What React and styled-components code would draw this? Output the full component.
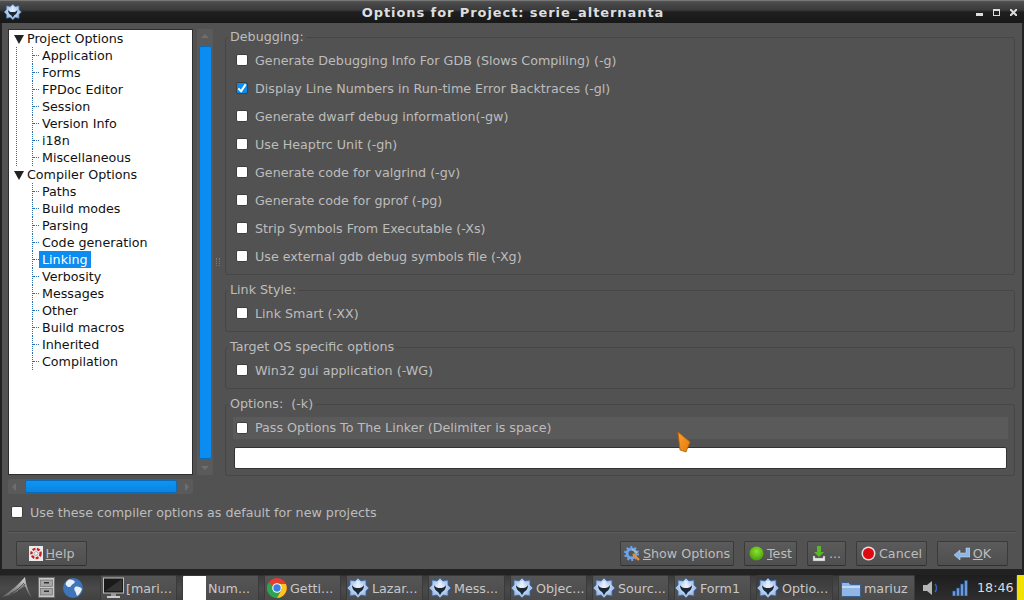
import React from "react";
import styled, { createGlobalStyle } from "styled-components";

const Global = createGlobalStyle`
  html, body { margin: 0; padding: 0; background: #525252; }
  * { box-sizing: border-box; }
  body { font-family: "DejaVu Sans", sans-serif; font-size: 12.7px; }
`;

const Screen = styled.div`
  position: relative;
  width: 1024px;
  height: 600px;
  overflow: hidden;
  display: flex;
  flex-direction: column;
  background: #525252;
  color: #bdbdbd;
`;

const TitleBar = styled.div`
  height: 23px;
  flex: none;
  display: flex;
  align-items: center;
  justify-content: space-between;
  padding: 0 7px 0 4px;
  background: linear-gradient(#555 0, #4a4a4a 2px, #3a3a3a 9px, #1f1f1f 11px, #181818 100%);
  border-top: 1px solid #777;
  color: #dedede;
  font-weight: bold;
  font-size: 13px;
  letter-spacing: 0.92px;
`;
const TitleText = styled.span`
  flex: 1;
  text-align: center;
  padding-left: 27px;
`;
const WinControls = styled.div`
  display: flex;
  align-items: center;
  gap: 10px;
`;

const Window = styled.div`
  flex: 1;
  display: flex;
  flex-direction: column;
  min-height: 0;
  border-left: 2px solid #222;
  border-right: 2px solid #222;
  border-bottom: 3px solid #222;
  padding: 6px 6px 0 6px;
`;
const Top = styled.div`
  display: flex;
  height: 465px;
  flex: none;
`;
const LeftCol = styled.div`
  width: 205px;
  flex: none;
  display: flex;
  flex-direction: column;
  gap: 4px;
`;
const TreeRow = styled.div`
  display: flex;
  height: 446px;
  gap: 4px;
`;
const Tree = styled.div`
  width: 185px;
  flex: none;
  background: #fff;
  border: 1px solid #2e2e2e;
  color: #111;
  padding: 0 0 0 7px;
`;
const Section = styled.div`
  border-left: 1px dotted ${(p) => (p.$line ? "#2a6fb5" : "transparent")};
`;
const Head = styled.div`
  height: 17px;
  display: flex;
  align-items: center;
  margin-left: -3px;
  gap: 3px;
  background: #fff;
  white-space: nowrap;
`;
const Children = styled.div`
  margin-left: 15px;
`;
const Leaf = styled.div`
  height: 17px;
  display: flex;
  align-items: center;
  white-space: nowrap;
  border-left: 1px dotted #2a6fb5;
`;
const Branch = styled.span`
  width: 6px;
  height: 0;
  border-top: 1px dotted #2a6fb5;
  flex: none;
`;
const LeafText = styled.span`
  padding: 0 3px;
  height: 17px;
  line-height: 17px;
  background: ${(p) => (p.$sel ? "#0a8cf0" : "transparent")};
  color: ${(p) => (p.$sel ? "#fff" : "#111")};
  min-width: ${(p) => (p.$sel ? "51px" : "0")};
`;

const VScroll = styled.div`
  width: 16px;
  flex: none;
  background: #5a5a5a;
  border-radius: 2px;
  display: flex;
  flex-direction: column;
  align-items: center;
  justify-content: space-between;
  padding: 0 2px;
`;
const VThumb = styled.div`
  width: 13px;
  height: 413px;
  background: #0a8cf0;
  border: 1px solid #0a6cb8;
  border-radius: 2px;
  flex: none;
`;
const HScroll = styled.div`
  width: 185px;
  height: 15px;
  background: #5a5a5a;
  border-radius: 2px;
  display: flex;
  align-items: center;
  justify-content: space-between;
  padding: 0 4px;
`;
const HThumb = styled.div`
  width: 152px;
  height: 13px;
  background: linear-gradient(#0f94f5, #0a84e0);
  border: 1px solid #0a6cb8;
  border-radius: 2px;
`;
const Arrow = styled.i`
  width: 0;
  height: 0;
  flex: none;
  display: block;
  border-style: solid;
  border-color: transparent;
  border-width: 4px;
  ${(p) => p.$dir === "up" && "border-bottom-color:#6e6e6e;border-top-width:0;margin-top:5px;"}
  ${(p) => p.$dir === "down" && "border-top-color:#6e6e6e;border-bottom-width:0;margin-bottom:5px;"}
  ${(p) => p.$dir === "left" && "border-right-color:#6e6e6e;border-left-width:0;"}
  ${(p) => p.$dir === "right" && "border-left-color:#6e6e6e;border-right-width:0;"}
`;

const Splitter = styled.div`
  width: 12px;
  flex: none;
  display: flex;
  align-items: center;
  padding-left: 3px;
`;
const Grip = styled.div`
  width: 4px;
  height: 8px;
  border-left: 1px dotted #777;
  border-right: 1px dotted #777;
`;

const RightCol = styled.div`
  width: 790px;
  flex: none;
  display: flex;
  flex-direction: column;
  gap: 7px;
`;
const Group = styled.fieldset`
  margin: 0;
  padding: 1px 6px 0 8px;
  border: 1px solid #464646;
  border-radius: 3px;
  min-width: 0;
  height: ${(p) => p.$h}px;
`;
const Legend = styled.legend`
  padding: 0 2px;
  margin-left: -6px;
  height: 16px;
  line-height: 15px;
  color: #bdbdbd;
  white-space: pre;
`;
const Row = styled.label`
  display: flex;
  align-items: center;
  height: 28px;
  gap: 7px;
  padding-left: 2px;
  white-space: nowrap;
`;
const Check = styled.span`
  width: 12px;
  height: 12px;
  flex: none;
  border-radius: 2px;
  border: 1px solid #3f3f3f;
  background: ${(p) => (p.$on ? "#0a8cf0" : "#fff")};
  display: flex;
  align-items: center;
  justify-content: center;
`;
const Strip = styled.div`
  height: 22px;
  margin: 4px 0 8px -1px;
  padding: 0 0 1px 3px;
  background: #5a5a5a;
  display: flex;
  align-items: center;
  gap: 7px;
`;
const Input = styled.div`
  height: 22px;
  width: 773px;
  background: #fff;
  border: 1px solid #333;
  border-radius: 2px;
`;

const DefaultRow = styled.div`
  display: flex;
  align-items: center;
  gap: 7px;
  height: 20px;
  margin: 8px 0 0 3px;
  flex: none;
`;
const Sep = styled.div`
  height: 2px;
  margin-top: 9px;
  flex: none;
  background: #444;
  border-bottom: 1px solid #5c5c5c;
`;
const Buttons = styled.div`
  display: flex;
  align-items: center;
  margin-top: 8px;
  padding: 0 8px 0 8px;
  flex: none;
`;
const Btn = styled.div`
  width: ${(p) => p.$w}px;
  height: 25px;
  flex: none;
  margin-left: ${(p) => p.$ml || 0}px;
  display: flex;
  align-items: center;
  justify-content: center;
  gap: 3px;
  background: linear-gradient(#5b5b5b, #4f4f4f);
  border: 1px solid #3a3a3a;
  border-bottom-color: #2f2f2f;
  border-radius: 2px;
  white-space: nowrap;
  color: #bdbdbd;
`;
const Spacer = styled.div`
  flex: 1;
`;

const Taskbar = styled.div`
  height: 28px;
  flex: none;
  display: flex;
  align-items: flex-end;
  background: linear-gradient(#222 0, #222 3px, #3c3c3c 4px, #4a4a4a 60%, #404040 100%);
`;
const QuickLaunch = styled.div`
  width: 100px;
  height: 25px;
  flex: none;
  display: flex;
  align-items: center;
  padding-left: 1px;
  gap: 5px;
`;
const TaskList = styled.div`
  display: flex;
  gap: 5px;
  height: 25px;
`;
const Task = styled.div`
  width: 77px;
  height: 25px;
  flex: none;
  display: flex;
  align-items: center;
  gap: 1px;
  padding-left: 2px;
  border: 1px solid #3a3a3a;
  border-bottom: none;
  border-radius: 2px 2px 0 0;
  background: ${(p) => (p.$active ? "linear-gradient(#3a3a3a,#4a4a4a)" : "linear-gradient(#555,#4b4b4b)")};
  color: #c8c8c8;
  white-space: nowrap;
  overflow: hidden;
`;
const Blank = styled.span`
  width: 23px;
  height: 24px;
  flex: none;
  background: #fff;
  margin: 0 1px 0 -2px;
`;
const Tray = styled.div`
  width: 101px;
  height: 25px;
  flex: none;
  display: flex;
  align-items: center;
  padding-left: 8px;
  gap: 9px;
  background: linear-gradient(#1e1e1e, #2e2e2e);
  color: #dcdcdc;
`;
const Notifier = styled.div`
  width: 7px;
  height: 25px;
  flex: none;
  margin-left: 1px;
  background: #f2e200;
`;
const Cursor = styled.svg`
  position: absolute;
  left: 677px;
  top: 431px;
`;
const LazSvg = styled.svg`
  flex: none;
  margin-left: ${(p) => p.$ml || 0}px;
`;

const Tri = () => (
  <svg width="10" height="10" viewBox="0 0 10 10" style={{ flex: "none" }}>
    <path d="M0 1H10L5 10Z" fill="#222" />
  </svg>
);
const Tick = () => (
  <svg width="11" height="11" viewBox="0 0 11 11">
    <path d="M1.5 5.5l3 3 5-7.5" fill="none" stroke="#fff" strokeWidth="2.2" />
  </svg>
);

const Lazarus = ({ w = 24, h = 20, ml = -2 }) => (
  <LazSvg width={w} height={h} viewBox="0 0 24 20" $ml={ml}>
    <defs>
      <radialGradient id="lz" cx=".5" cy=".45" r=".6">
        <stop offset="0" stopColor="#f4f8ff" />
        <stop offset="1" stopColor="#7fa8e0" />
      </radialGradient>
    </defs>
    <path d="M11 0l3 3 5-1 0 5 3 3-3 3 0 5-5-1-3 3-3-3-5 1 0-5-3-3 3-3 0-5 5 1z" fill="url(#lz)" stroke="#3d68a8" strokeWidth="0.8" />
    <path d="M5 7c1 2 3 3 5 3V4h2v6c2 0 4-1 5-3 0 4-2 6-4 7l-2 3-2-3c-2-1-4-3-4-7z" fill="#1c2836" />
    <path d="M9.5 3h3v7h-3z" fill="#e4eefc" />
  </LazSvg>
);
const Arch = () => (
  <svg width="32" height="24" viewBox="0 0 32 24" style={{ flex: "none" }}>
    <defs>
      <linearGradient id="ar" x1="0" y1="0" x2="0" y2="1">
        <stop offset="0" stopColor="#d8d8d8" />
        <stop offset="1" stopColor="#555" />
      </linearGradient>
    </defs>
    <path d="M1 21C10 15 18 8 24 1c1 7 3 15 8 22-4-4-6-8-8-13C18 15 10 19 1 21z" fill="url(#ar)" />
    <path d="M9 18c6-3 10-6 14-11M17 15c3-2 5-4 7-7" stroke="#2b2b2b" strokeWidth=".7" fill="none" />
  </svg>
);
const Cabinet = () => (
  <svg width="20" height="21" viewBox="0 0 20 21" style={{ flex: "none" }}>
    <rect x="0.5" y="0.5" width="16" height="20" fill="#c8c8c8" stroke="#6e6e6e" />
    <rect x="2.5" y="3" width="12" height="6.5" fill="#a6a6a6" stroke="#666" strokeWidth=".6" />
    <rect x="2.5" y="11.5" width="12" height="6.5" fill="#a6a6a6" stroke="#666" strokeWidth=".6" />
    <rect x="6" y="5" width="5" height="1.5" fill="#333" />
    <rect x="6" y="13.5" width="5" height="1.5" fill="#333" />
  </svg>
);
const Globe = () => (
  <svg width="20" height="20" viewBox="0 0 20 20" style={{ flex: "none" }}>
    <circle cx="10" cy="10" r="10" fill="#3f74b8" />
    <path d="M5 2c3-1 6 0 7 2-1 2-3 2-4 4S4 9 3 7s1-4 2-5zM12 9c2-1 6 0 7 2-1 3-3 6-5 7-1-2-1-4-2-5s-1-3 0-4z" fill="#e6eef7" />
  </svg>
);
const Monitor = () => (
  <svg width="22" height="22" viewBox="0 0 22 22" style={{ flex: "none" }}>
    <rect x="0.5" y="1" width="20" height="15" fill="#1a1a1a" stroke="#bdbdbd" />
    <path d="M2 14L19 2v12z" fill="#333" />
    <rect x="8" y="16" width="5" height="3" fill="#999" />
    <rect x="4" y="19" width="13" height="2" fill="#ccc" />
  </svg>
);
const Chrome = () => (
  <svg width="22" height="20" viewBox="0 0 22 20" style={{ flex: "none" }}>
    <circle cx="10" cy="10" r="10" fill="#e53d30" />
    <path d="M10 10L1.3 5A10 10 0 0 0 10 20L15 11z" fill="#2ea44f" />
    <path d="M10 6h8.9A10 10 0 0 1 10 20l5-9z" fill="#f8c81c" />
    <circle cx="10" cy="10" r="4.8" fill="#fff" />
    <circle cx="10" cy="10" r="3.7" fill="#3d7fe0" />
  </svg>
);
const Folder = () => (
  <svg width="22" height="17" viewBox="0 0 22 17" style={{ flex: "none" }}>
    <path d="M.5 2.5h7l2 2h10v12H.5z" fill="#8fb6e4" stroke="#3c5f94" />
    <path d="M1 6h18v2H1z" fill="#c3d9f2" />
  </svg>
);
const Speaker = () => (
  <svg width="20" height="16" viewBox="0 0 20 16" style={{ flex: "none" }}>
    <path d="M0 5h4l5-4v14l-5-4H0z" fill="#b5b5b5" />
    <path d="M12 4c2 2 2 6 0 8" stroke="#3568b5" strokeWidth="1.4" fill="none" />
  </svg>
);
const Signal = () => (
  <svg width="16" height="16" viewBox="0 0 16 16" style={{ flex: "none" }}>
    <g fill="#6a9ad8" stroke="#24477a" strokeWidth=".6">
      <rect x="0.5" y="11" width="3" height="5" />
      <rect x="4.5" y="8" width="3" height="8" />
      <rect x="8.5" y="4" width="3" height="12" />
      <rect x="12.5" y="0.5" width="3" height="15.5" />
    </g>
  </svg>
);

const HelpIcon = () => (
  <svg width="14" height="15" viewBox="0 0 14 15">
    <rect width="14" height="15" fill="#ececec" />
    <circle cx="7" cy="7.5" r="4.6" fill="none" stroke="#cc2020" strokeWidth="2.4" strokeDasharray="3 1.4" />
    <circle cx="7" cy="7.5" r="2" fill="#ececec" stroke="#777" strokeWidth=".5" />
  </svg>
);
const GearIcon = () => (
  <svg width="16" height="16" viewBox="0 0 16 16">
    <circle cx="7.5" cy="7.5" r="4.5" fill="none" stroke="#6ea4e4" strokeWidth="3" />
    <circle cx="7.5" cy="7.5" r="6.5" fill="none" stroke="#6ea4e4" strokeWidth="2" strokeDasharray="2 2.1" />
    <path d="M9 8l6 6" stroke="#e88d3c" strokeWidth="2.4" />
    <path d="M8 3l5 4" stroke="#bbb" strokeWidth="1.6" />
  </svg>
);
const GreenIcon = () => (
  <svg width="15" height="15" viewBox="0 0 15 15">
    <defs>
      <radialGradient id="g" cx=".5" cy=".35" r=".7">
        <stop offset="0" stopColor="#8fe030" />
        <stop offset="1" stopColor="#3f9a0a" />
      </radialGradient>
    </defs>
    <circle cx="7.5" cy="7.5" r="7" fill="url(#g)" />
  </svg>
);
const SaveIcon = () => (
  <svg width="14" height="16" viewBox="0 0 14 16">
    <path d="M5 0h4v6h3L7 11 2 6h3z" fill="#58b82a" />
    <path d="M1 10v5h12v-5l-2 0v2H3v-2z" fill="#e8e8e8" stroke="#888" strokeWidth=".4" />
  </svg>
);
const CancelIcon = () => (
  <svg width="15" height="15" viewBox="0 0 15 15">
    <circle cx="7.5" cy="7.5" r="7" fill="#e2e2e2" />
    <circle cx="7.5" cy="7.5" r="5.5" fill="#dd0a12" />
  </svg>
);
const OkIcon = () => (
  <svg width="16" height="13" viewBox="0 0 16 13">
    <path d="M0 8l6-5v3h6V1h4v9H6v3z" fill="#8db6e8" stroke="#cfe0f5" strokeWidth=".5" />
  </svg>
);

const project = ["Application", "Forms", "FPDoc Editor", "Session", "Version Info", "i18n", "Miscellaneous"];
const compiler = ["Paths", "Build modes", "Parsing", "Code generation", "Linking", "Verbosity", "Messages", "Other", "Build macros", "Inherited", "Compilation"];
const debugging = [
  "Generate Debugging Info For GDB (Slows Compiling) (-g)",
  "Display Line Numbers in Run-time Error Backtraces (-gl)",
  "Generate dwarf debug information(-gw)",
  "Use Heaptrc Unit (-gh)",
  "Generate code for valgrind (-gv)",
  "Generate code for gprof (-pg)",
  "Strip Symbols From Executable (-Xs)",
  "Use external gdb debug symbols file (-Xg)",
];
const tasks = [
  { label: "[mari...", icon: <Monitor /> },
  { label: "Num...", icon: <Blank /> },
  { label: "Getti...", icon: <Chrome /> },
  { label: "Lazar...", icon: <Lazarus /> },
  { label: "Mess...", icon: <Lazarus /> },
  { label: "Objec...", icon: <Lazarus /> },
  { label: "Sourc...", icon: <Lazarus /> },
  { label: "Form1", icon: <Lazarus /> },
  { label: "Optio...", icon: <Lazarus />, active: true },
  { label: "mariuz", icon: <Folder /> },
];

const Leaves = ({ items }) => (
  <Children>
    {items.map((t) => (
      <Leaf key={t}>
        <Branch />
        <LeafText $sel={t === "Linking"}>{t}</LeafText>
      </Leaf>
    ))}
  </Children>
);

export default function App() {
  return (
    <Screen>
      <Global />
      <TitleBar>
        <Lazarus w={19} h={16} ml={0} />
        <TitleText>Options for Project: serie_alternanta</TitleText>
        <WinControls>
          <svg width="7" height="7" viewBox="0 0 7 7">
            <rect y="4" width="7" height="3" fill="#ddd" />
          </svg>
          <svg width="7" height="7" viewBox="0 0 7 7">
            <rect x=".5" y=".5" width="6" height="6" fill="none" stroke="#ddd" />
            <rect width="7" height="2" fill="#ddd" />
          </svg>
          <svg width="7" height="7" viewBox="0 0 7 7">
            <path d="M0 0l7 7M7 0L0 7" stroke="#ddd" strokeWidth="2" />
          </svg>
        </WinControls>
      </TitleBar>

      <Window>
        <Top>
          <LeftCol>
            <TreeRow>
              <Tree>
                <Section $line>
                  <Head>
                    <Tri />
                    Project Options
                  </Head>
                  <Leaves items={project} />
                </Section>
                <Section>
                  <Head>
                    <Tri />
                    Compiler Options
                  </Head>
                  <Leaves items={compiler} />
                </Section>
              </Tree>
              <VScroll>
                <Arrow $dir="up" />
                <VThumb />
                <Arrow $dir="down" />
              </VScroll>
            </TreeRow>
            <HScroll>
              <Arrow $dir="left" />
              <HThumb />
              <Arrow $dir="right" />
            </HScroll>
          </LeftCol>
          <Splitter>
            <Grip />
          </Splitter>
          <RightCol>
            <Group $h={246}>
              <Legend>Debugging:</Legend>
              {debugging.map((t, i) => (
                <Row key={t}>
                  <Check $on={i === 1}>{i === 1 && <Tick />}</Check>
                  {t}
                </Row>
              ))}
            </Group>
            <Group $h={50}>
              <Legend>Link Style:</Legend>
              <Row>
                <Check />
                Link Smart (-XX)
              </Row>
            </Group>
            <Group $h={50}>
              <Legend>Target OS specific options</Legend>
              <Row>
                <Check />
                Win32 gui application (-WG)
              </Row>
            </Group>
            <Group $h={80}>
              <Legend>Options:  (-k)</Legend>
              <Strip>
                <Check />
                Pass Options To The Linker (Delimiter is space)
              </Strip>
              <Input />
            </Group>
          </RightCol>
        </Top>
        <DefaultRow>
          <Check />
          Use these compiler options as default for new projects
        </DefaultRow>
        <Sep />
        <Buttons>
          <Btn $w={71}>
            <HelpIcon />
            <span>
              <u>H</u>elp
            </span>
          </Btn>
          <Spacer />
          <Btn $w={114}>
            <GearIcon />
            <span>
              <u>S</u>how Options
            </span>
          </Btn>
          <Btn $w={53} $ml={10}>
            <GreenIcon />
            <span>
              <u>T</u>est
            </span>
          </Btn>
          <Btn $w={39} $ml={10}>
            <SaveIcon />
            <span>...</span>
          </Btn>
          <Btn $w={71} $ml={10}>
            <CancelIcon />
            <span>Cancel</span>
          </Btn>
          <Btn $w={71} $ml={10}>
            <OkIcon />
            <span>
              <u>O</u>K
            </span>
          </Btn>
        </Buttons>
      </Window>

      <Taskbar>
        <QuickLaunch>
          <Arch />
          <Cabinet />
          <Globe />
        </QuickLaunch>
        <TaskList>
          {tasks.map((t) => (
            <Task key={t.label} $active={t.active}>
              {t.icon}
              {t.label}
            </Task>
          ))}
        </TaskList>
        <Tray>
          <Speaker />
          <Signal />
          18:46
        </Tray>
        <Notifier />
      </Taskbar>

      <Cursor width="15" height="23" viewBox="0 0 15 23">
        <defs>
          <linearGradient id="cur" x1="0" y1="0" x2="1" y2="1">
            <stop offset="0" stopColor="#ffa030" />
            <stop offset="1" stopColor="#e07a08" />
          </linearGradient>
        </defs>
        <path d="M1 1l12 10-4 10-6-2z" fill="url(#cur)" stroke="#b9620a" strokeWidth=".8" />
      </Cursor>
    </Screen>
  );
}
